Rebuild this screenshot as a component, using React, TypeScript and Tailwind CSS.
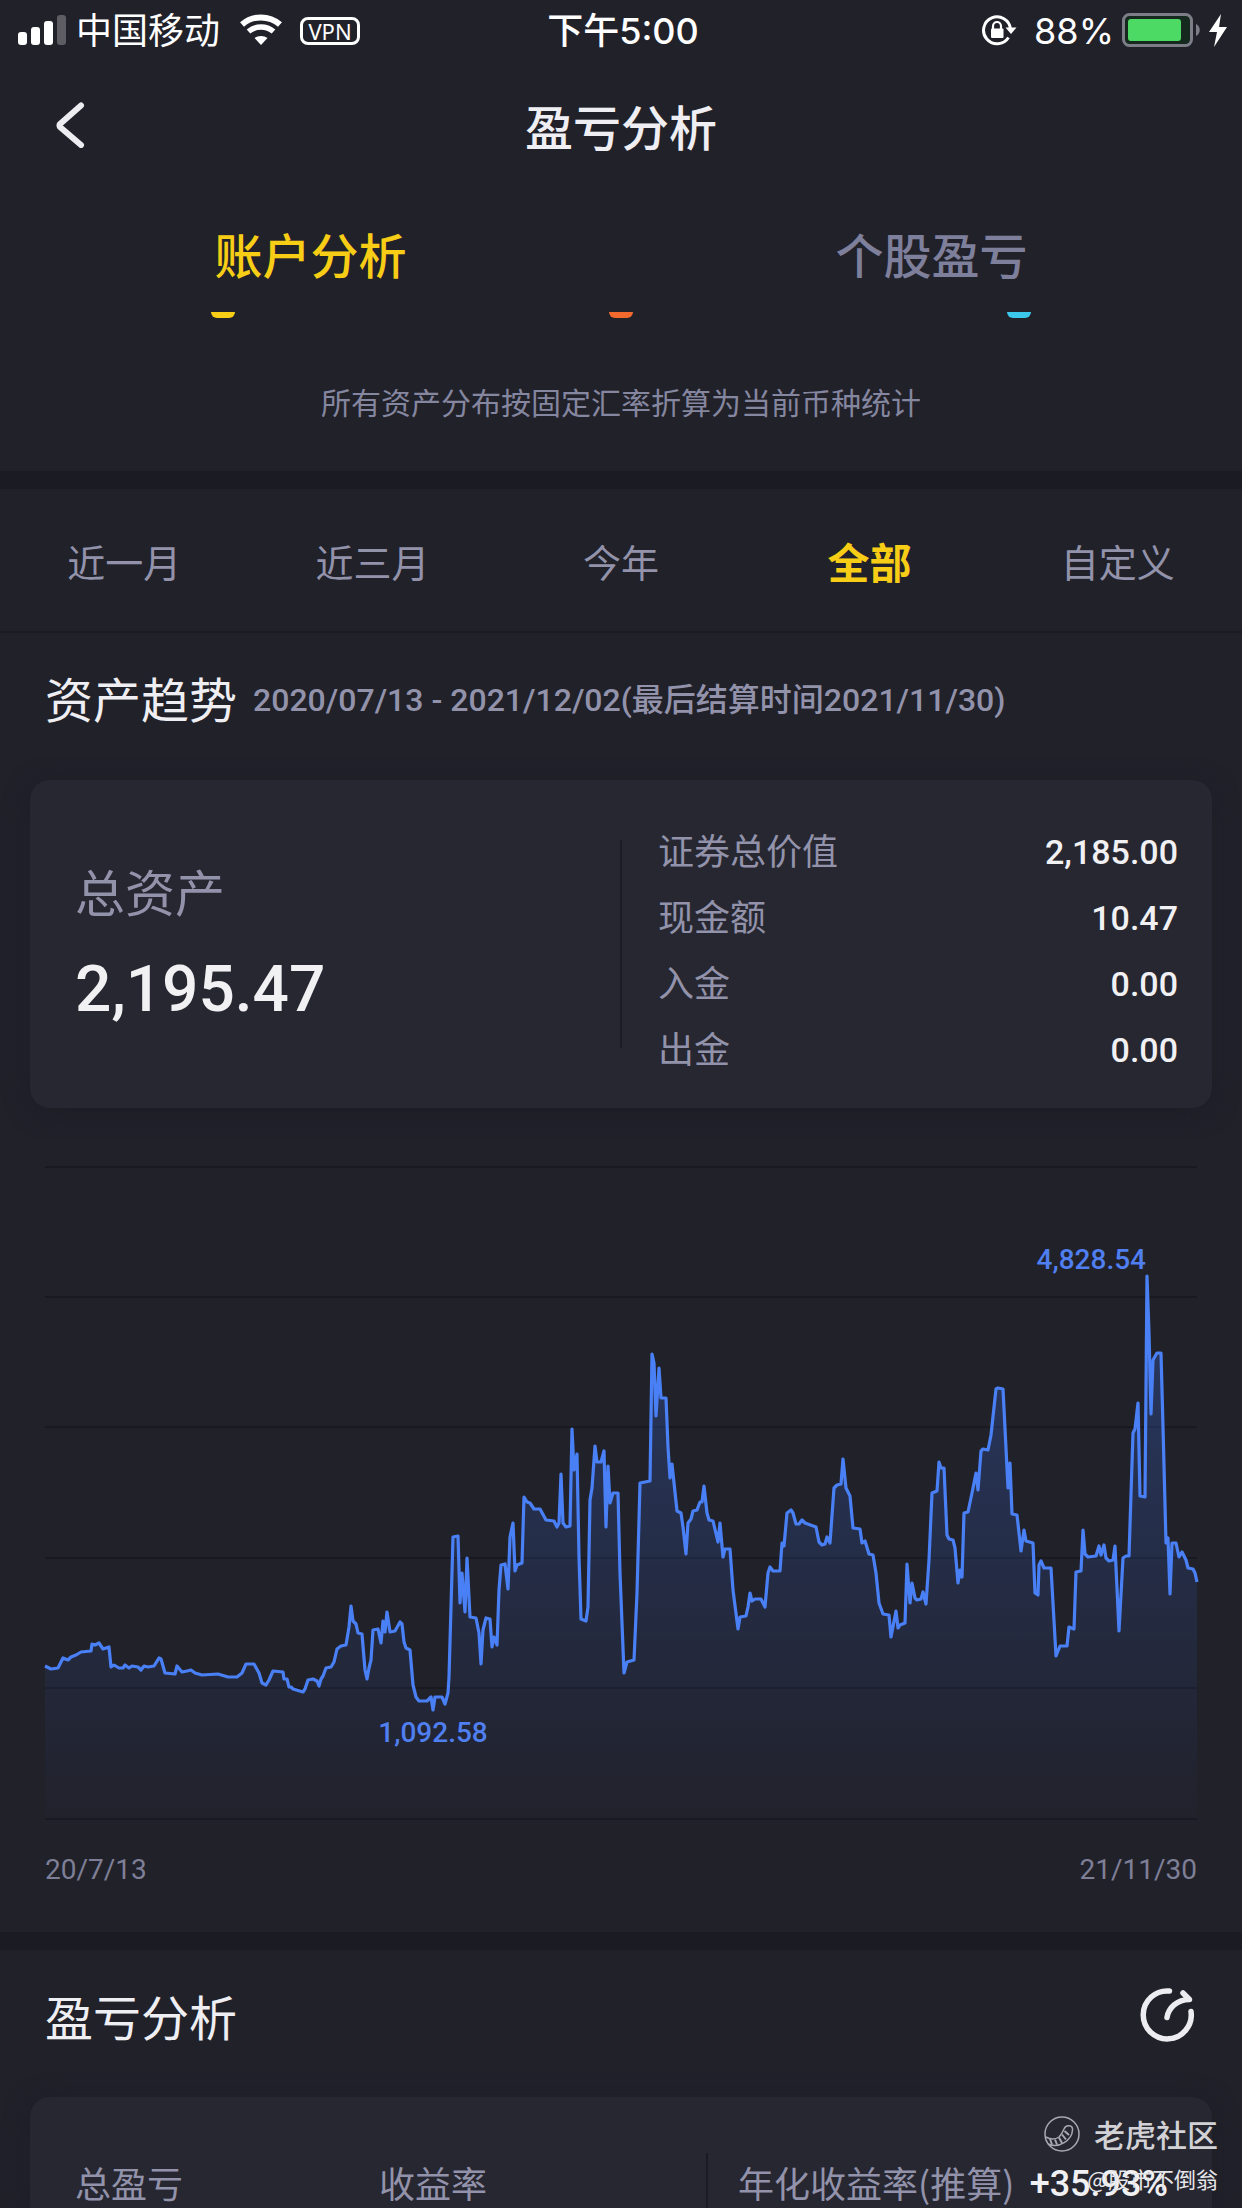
import { clsx } from "clsx";

const CHART_W = 1152;
const CHART_H = 652;
const GRID_LINES = [0, 130, 260, 391, 521, 652];

// asset curve, x,y pairs in chart units
const CURVE =
  "0,499 6,502 13,501 18,491 23,493 26,490 31,488 36,485 46,484 47,477 50,478 54,476 58,482 64,480 66,500 69,498 74,501 78,501 80,498 84,501 87,499 93,500 96,503 99,499 103,500 109,499 114,491 116,492 120,506 130,507 132,499 137,505 142,504 146,503 150,506 157,508 173,507 183,510 192,510 197,506 201,497 209,497 214,506 217,516 221,518 224,513 228,504 238,505 239,512 242,512 244,520 246,520 248,522 258,525 260,522 263,513 268,512 272,514 274,519 276,512 278,509 281,501 286,500 289,495 292,482 296,479 301,478 304,460 306,439 308,454 311,457 313,466 317,467 320,503 322,512 324,501 326,493 328,463 333,462 336,476 338,454 340,465 342,445 345,465 350,464 355,455 357,457 359,475 361,481 365,483 368,518 371,530 374,534 382,534 386,530 388,543 390,530 397,530 400,537 403,526 404,510 406,440 408,370 413,369 415,436 417,406 420,445 422,391 425,450 431,451 434,466 436,497 438,463 441,451 445,452 447,480 449,470 452,478 454,423 456,398 460,397 463,422 465,370 468,356 470,404 472,398 477,396 479,330 482,335 485,336 489,342 495,342 501,353 509,354 512,360 514,356 516,307 518,356 521,360 525,359 527,262 529,303 532,287 534,390 536,452 541,454 543,440 545,333 547,321 550,279 552,295 556,295 559,284 561,360 563,299 565,336 568,326 573,326 575,406 579,506 582,495 589,493 592,426 595,316 605,314 607,187 609,196 611,249 614,201 616,231 621,231 623,280 625,311 627,297 632,344 636,346 638,360 641,387 643,356 646,352 648,344 652,343 655,335 657,335 659,319 662,346 664,353 668,354 673,375 675,356 678,390 680,382 685,382 688,423 693,462 695,450 701,449 703,440 705,426 707,434 710,432 716,432 720,440 723,406 725,400 728,404 735,404 737,376 739,379 742,346 746,343 748,346 751,357 754,357 757,353 760,356 771,360 774,375 777,378 780,377 782,370 785,376 789,321 792,318 796,317 798,292 801,321 805,329 808,361 815,362 817,376 820,374 824,387 828,388 831,406 834,436 838,447 844,448 846,470 851,444 853,461 855,458 860,456 862,397 865,436 867,416 870,431 872,433 876,432 878,425 881,437 884,393 887,326 892,324 894,295 896,301 899,301 902,368 904,372 908,373 910,381 913,416 915,403 917,410 919,346 923,345 927,326 931,306 933,323 936,284 938,282 943,283 946,268 951,222 953,221 958,222 963,321 965,296 967,347 972,348 976,384 979,363 981,374 988,376 990,426 993,428 994,398 996,394 999,401 1006,401 1011,489 1015,479 1022,479 1024,460 1029,462 1031,405 1036,404 1038,363 1040,387 1043,390 1051,389 1054,379 1056,388 1059,378 1061,391 1064,394 1068,393 1070,379 1074,464 1078,391 1081,389 1084,389 1088,266 1090,262 1093,236 1095,329 1100,330 1102,109 1104,166 1106,247 1108,193 1112,186 1116,186 1118,260 1121,376 1123,371 1125,427 1127,376 1131,376 1134,390 1137,385 1141,393 1143,401 1148,402 1150,406 1152,415";

const LEGEND = [
  { id: "a", color: "bg-[#f7cd16]" },
  { id: "b", color: "bg-[#f2692d]" },
  { id: "c", color: "bg-[#3cc8ea]" },
];

const RANGES = ["近一月", "近三月", "今年", "全部", "自定义"];

const BREAKDOWN = [
  { label: "证券总价值", value: "2,185.00" },
  { label: "现金额", value: "10.47" },
  { label: "入金", value: "0.00" },
  { label: "出金", value: "0.00" },
];

function StatusBar() {
  return (
    <div className="grid h-[62px] grid-cols-3 items-center pr-[14px] pl-[18px] font-['Inter','Noto_Sans_CJK_SC',sans-serif] text-4xl text-white">
      <div className="flex items-center">
        <svg className="h-9 w-12" viewBox="0 0 48 36" fill="currentColor">
          <rect x="0" y="19" width="9" height="13" rx="3" />
          <rect x="13" y="14" width="9" height="18" rx="3" />
          <rect x="26" y="8" width="9" height="24" rx="3" />
          <rect x="39" y="2" width="9" height="30" rx="3" opacity="0.27" />
        </svg>
        <span className="ml-[10px]">中国移动</span>
        <svg className="ml-5 h-9 w-[42px]" viewBox="0 0 42 36" fill="none" stroke="currentColor">
          <path d="M2 11.500C13 2 29 2 40 11.500" strokeWidth="6" />
          <path d="M8.500 18.500C15.500 12.500 26.500 12.500 33.500 18.500" strokeWidth="5.500" />
          <path d="M14.500 25C18 22.200 24 22.200 27.500 25L21 32Z" fill="currentColor" stroke="none" />
        </svg>
        <span className="ml-[18px] flex h-7 w-[60px] items-center justify-center rounded-lg border-[3px] border-white font-['Noto_Sans',sans-serif] text-[22px] leading-none">
          VPN
        </span>
      </div>
      <div className="text-center font-medium">下午5:00</div>
      <div className="flex items-center justify-end">
        <svg className="h-9 w-9" viewBox="0 0 36 36" fill="none" stroke="currentColor">
          <path d="M26.500 24.500A13.500 13.500 0 1 1 28.500 16" strokeWidth="3" />
          <path d="M23.500 14.500H34.500L29 21Z" fill="currentColor" stroke="none" />
          <rect x="9" y="15.500" width="12.500" height="9.500" rx="1" fill="currentColor" stroke="none" />
          <path d="M11 16.500V13A4 4 0 0 1 19 13V16.500" strokeWidth="2.200" />
        </svg>
        <span className="ml-4">88%</span>
        <svg className="ml-2 h-9 w-[78px]" viewBox="0 0 78 36" fill="none">
          <rect x="1.500" y="1.500" width="68" height="31" rx="6" fill="#16291f" stroke="#7d7d88" strokeWidth="3" />
          <rect x="6" y="6" width="53" height="22" rx="3" fill="#4cd964" />
          <path d="M74 11C79 13 79 21 74 23Z" fill="#7d7d88" />
        </svg>
        <svg className="ml-2 h-9 w-5" viewBox="0 0 20 36" fill="currentColor">
          <path d="M13 1L1 19H9L6 34L19 14H11Z" />
        </svg>
      </div>
    </div>
  );
}

function TopBar() {
  return (
    <header className="grid h-[132px] grid-cols-[1fr_auto_1fr] items-center pb-[6px]">
      <button type="button" aria-label="返回" className="ml-[54px] flex h-14 w-10 items-center text-[#ececf1]">
        <svg
          className="h-[46px] w-8"
          viewBox="0 0 32 46"
          fill="none"
          stroke="currentColor"
          strokeWidth="6"
          strokeLinecap="round"
          strokeLinejoin="round"
        >
          <path d="M27 3.500L6 22Q5 23.500 6 25L27 43" />
        </svg>
      </button>
      <h1 className="text-5xl font-medium text-[#efeff3]">盈亏分析</h1>
    </header>
  );
}

function AccountTabs() {
  return (
    <nav className="grid h-[118px] grid-cols-2 text-5xl font-medium">
      <button type="button" className="text-[#f7cd16]">
        账户分析
      </button>
      <button type="button" className="text-[#7e7f9b]">
        个股盈亏
      </button>
    </nav>
  );
}

function RangeTabs() {
  return (
    <div className="grid h-36 grid-cols-5 border-b-2 border-[#1b1b23]">
      {RANGES.map((range) => (
        <button
          key={range}
          type="button"
          className={clsx(range === "全部" ? "text-[42px] font-bold text-[#f7cd16]" : "text-[38px] text-[#9293ab]")}
        >
          {range}
        </button>
      ))}
    </div>
  );
}

function AssetCard() {
  return (
    <div className="mx-[30px] mt-[13px] grid h-[328px] grid-cols-[1fr_2px_1fr] rounded-[20px] bg-[#272731] shadow-[0_4px_24px_#1d1d26]">
      <div className="flex flex-col justify-center pb-1 pl-[45px]">
        <div className="text-[50px] leading-[80px] text-[#9293ab]">总资产</div>
        <div className="mt-4 font-['Roboto',sans-serif] text-[64px] leading-[88px] font-medium text-[#f1f1f4]">
          2,195.47
        </div>
      </div>
      <div className="my-[60px] bg-[#1b1b23]" />
      <dl className="self-center pt-2 pr-[34px] pl-9">
        {BREAKDOWN.map((row) => (
          <div key={row.label} className="flex h-[66px] items-center justify-between">
            <dt className="text-4xl text-[#9293ab]">{row.label}</dt>
            <dd className="pt-[6px] font-['Roboto',sans-serif] text-[34px] font-medium text-[#f1f1f4]">{row.value}</dd>
          </div>
        ))}
      </dl>
    </div>
  );
}

function AssetChart() {
  return (
    <div className="mx-[45px] mt-[59px]">
      <svg className="block w-full overflow-visible" viewBox={`0 0 ${CHART_W} ${CHART_H}`} fill="none">
        <defs>
          <linearGradient id="assetFill" x1="0" y1="109" x2="0" y2={CHART_H} gradientUnits="userSpaceOnUse">
            <stop offset="0" stopColor="#3b6be0" stopOpacity="0.34" />
            <stop offset="0.5" stopColor="#3667d0" stopOpacity="0.18" />
            <stop offset="1" stopColor="#3060c0" stopOpacity="0.01" />
          </linearGradient>
        </defs>
        {GRID_LINES.map((y) => (
          <line key={y} x1="0" y1={y} x2={CHART_W} y2={y} stroke="#191921" strokeWidth="2" />
        ))}
        <polygon points={`0,${CHART_H} ${CURVE} ${CHART_W},${CHART_H}`} fill="url(#assetFill)" />
        <polyline points={CURVE} stroke="#4a80f5" strokeWidth="3.200" strokeLinejoin="round" />
        <g fill="#4f7ff0" className="font-['Roboto',sans-serif] text-[28px] font-medium">
          <text x="1101" y="102" textAnchor="end">
            4,828.54
          </text>
          <text x="388" y="575" textAnchor="middle">
            1,092.58
          </text>
        </g>
      </svg>
      <div className="flex h-[113px] items-center justify-between pb-3 font-['Roboto',sans-serif] text-[28px] text-[#7e7f96]">
        <span>20/7/13</span>
        <span>21/11/30</span>
      </div>
    </div>
  );
}

function ProfitSection() {
  return (
    <section>
      <div className="flex h-[136px] items-center justify-between pr-12 pb-[6px] pl-[45px]">
        <h2 className="text-5xl text-[#efeff3]">盈亏分析</h2>
        <button type="button" aria-label="分享" className="text-[#ececf1]">
          <svg
            className="h-[54px] w-[54px]"
            viewBox="0 0 54 54"
            fill="none"
            stroke="currentColor"
            strokeWidth="5.500"
            strokeLinecap="round"
            strokeLinejoin="round"
          >
            <path d="M29.500 3A24 24 0 1 0 51 23.500" />
            <path d="M27 29.500C28.500 20 37 11.500 49.500 11.500L43 5" />
          </svg>
        </button>
      </div>
      <div className="mx-[30px] mt-[11px] flex rounded-t-[20px] bg-[#272731] text-4xl leading-[54px] text-[#9293ab] shadow-[0_4px_24px_#1d1d26]">
        <div className="w-[304px] pt-[58px] pl-[45px]">总盈亏</div>
        <div className="flex-1 pt-[58px] pl-[45px]">收益率</div>
        <div className="mt-14 flex w-[506px] justify-between border-l-2 border-[#1b1b23] pt-[2px] pr-[44px] pl-[30px]">
          <span>年化收益率(推算)</span>
          <span className="pt-[2px] font-['Roboto',sans-serif] font-medium text-[#f1f1f4]">+35.93%</span>
        </div>
      </div>
    </section>
  );
}

function Watermark() {
  return (
    <div className="absolute right-6 bottom-3 flex flex-col items-end">
      <div className="flex items-center gap-[14px] text-[31px] leading-[46px] font-medium text-[#d2d2d6]">
        <svg className="h-9 w-9" viewBox="0 0 36 36" fill="none" stroke="#a8a8b0" strokeWidth="1.500">
          <circle cx="18" cy="18" r="17" />
          <path d="M2 21Q9 25 15 21Q18 18 20 13C22 8 29 9 28.500 14C28 24 15 33 4 28" />
          <path d="M6 23L8 28.500M11 23.500L13 28.500M15 21.500L18 27M18 18.500L22 23.500M20.500 15L25 19" strokeWidth="2" />
        </svg>
        老虎社区
      </div>
      <div className="text-[22px] leading-[42px] text-[#e6e6ea]">@股市不倒翁</div>
    </div>
  );
}

export default function App() {
  return (
    <div className="relative min-h-screen overflow-hidden bg-[#21212a] font-['Noto_Sans_CJK_SC',sans-serif]">
      <StatusBar />
      <TopBar />
      <AccountTabs />
      <div className="grid grid-cols-3 justify-items-center px-6">
        {LEGEND.map((item) => (
          <span key={item.id} className={clsx("h-[6px] w-6 rounded-b-md", item.color)} />
        ))}
      </div>
      <p className="pt-[63px] pb-[50px] text-center text-3xl leading-10 text-[#85869f]">
        所有资产分布按固定汇率折算为当前币种统计
      </p>
      <div className="h-[18px] bg-[#1b1b23]" />
      <RangeTabs />
      <section>
        <div className="flex h-[134px] items-center gap-4 pl-[45px]">
          <h2 className="pb-[6px] text-5xl text-[#efeff3]">资产趋势</h2>
          <span className="font-['Roboto','Noto_Sans_CJK_SC',sans-serif] text-[32px] font-medium text-[#9293ab]">
            2020/07/13 - 2021/12/02(最后结算时间2021/11/30)
          </span>
        </div>
        <AssetCard />
        <AssetChart />
      </section>
      <div className="h-[18px] bg-[#1b1b23]" />
      <ProfitSection />
      <Watermark />
    </div>
  );
}
